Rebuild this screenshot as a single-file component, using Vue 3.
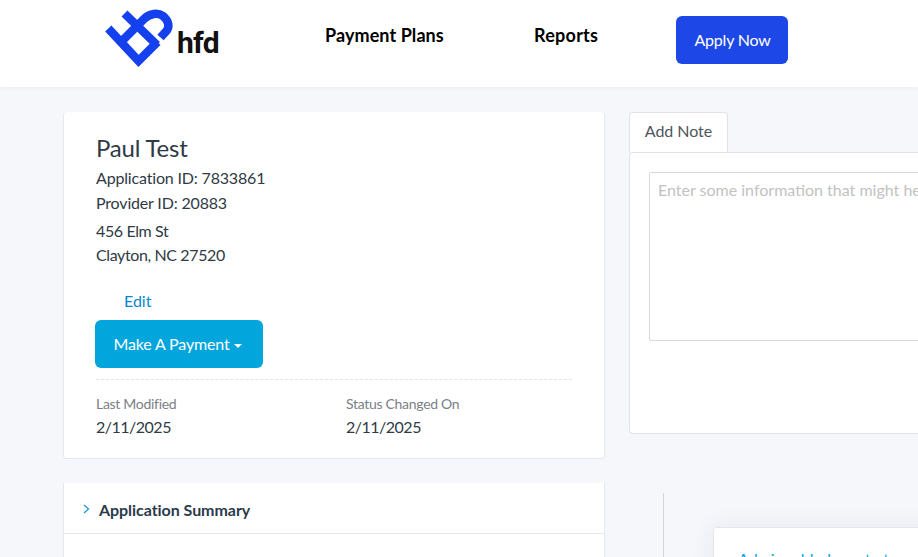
<template>
  <div class="page">
    <header class="topbar">
      <a class="logo">
        <svg class="mark" width="72" height="60" viewBox="104 8 72 60">
          <g fill="none" stroke="#1440ee" stroke-width="8.500">
            <path d="M124.500 13.500 L157 45" />
            <path d="M108.300 28.500 L138.500 61 L157.500 42" />
            <path d="M122 41 L144 19 C150 13 158 12.500 163 16 C169 21 170 27 166 31.500 L160.500 37.500" />
          </g>
        </svg>
        <span class="logo-text">hfd</span>
      </a>
      <nav class="nav">
        <a class="nav-link first">Payment Plans</a>
        <a class="nav-link second">Reports</a>
        <button class="apply">Apply Now</button>
      </nav>
    </header>
    <main class="content">
      <section class="left">
        <div class="card">
          <h2 class="name">Paul Test</h2>
          <div class="line">Application ID: 7833861</div>
          <div class="line">Provider ID: 20883</div>
          <div class="address">
            <div>456 Elm St</div>
            <div>Clayton, NC 27520</div>
          </div>
          <a class="edit">Edit</a>
          <button class="pay">Make A Payment <i class="caret"></i></button>
          <div class="dates">
            <div class="date-col">
              <div class="label">Last Modified</div>
              <div class="value">2/11/2025</div>
            </div>
            <div class="date-col">
              <div class="label">Status Changed On</div>
              <div class="value">2/11/2025</div>
            </div>
          </div>
        </div>
        <div class="summary">
          <div class="summary-head">
            <svg class="chev" width="7" height="10" viewBox="0 0 7 10"><path d="M1 1l4.500 4-4.500 4" fill="none" stroke="#1e9be0" stroke-width="1.300"/></svg>
            <span>Application Summary</span>
          </div>
        </div>
      </section>
      <section class="right">
        <div class="tab">Add Note</div>
        <div class="note">
          <textarea class="area" placeholder="Enter some information that might help the team review this application"></textarea>
        </div>
        <div class="lower">
          <div class="timeline"></div>
          <div class="advice"><span>Admin added a note to</span></div>
        </div>
      </section>
    </main>
  </div>
</template>

<script setup>
</script>

<style>
html, body { margin: 0; height: 100%; overflow: hidden; background: #f6f7fb; }
</style>

<style scoped>
.page {
  width: 918px;
  height: 557px;
  overflow: hidden;
  background: #f6f7fb;
  font-family: Lato, sans-serif;
  color: #2f3a45;
}
.topbar {
  height: 87px;
  background: #fff;
  box-shadow: 0 1px 6px rgba(30, 40, 70, .05);
  display: flex;
  align-items: flex-start;
  padding-left: 104px;
  box-sizing: border-box;
}
.logo { display: flex; align-items: flex-start; width: 221px; padding-top: 8px; }
.logo-text {
  font: 700 30px/1 "Roboto", sans-serif;
  color: #111;
  margin: 20px 0 0 1px;
  letter-spacing: -.7px;
}
.mark { flex: none; }
.nav { display: flex; align-items: flex-start; }
.nav-link { font-size: 18px; font-weight: 700; color: #000; line-height: 22px; margin-top: 24px; }
.first { width: 209px; letter-spacing: .08px; }
.second { width: 142px; letter-spacing: .25px; }
.apply {
  margin-top: 16px;
  width: 112px;
  height: 48px;
  padding: 0 0 2px 1px;
  background: #1d47e6;
  border: 0;
  border-radius: 6px;
  color: #fff;
  font: 400 16px Lato, sans-serif;
  letter-spacing: -.2px;
}
.content {
  display: flex;
  padding: 25px 0 0 63px;
  gap: 24px;
}
.left { width: 542px; flex: none; }
.card {
  height: 347px;
  background: #fff;
  border: 1px solid #e6e7eb;
  border-top: 0;
  border-radius: 4px;
  padding: 23px 32px 0;
  box-sizing: border-box;
  font-size: 16px;
}
.name { margin: 0; font-size: 24px; font-weight: 400; line-height: 26px; color: #2f3a45; letter-spacing: -.2px; }
.line { line-height: 25px; letter-spacing: -.17px; }
.line:first-of-type { margin-top: 4px; }
.address { margin-top: 4px; line-height: 24px; letter-spacing: -.38px; }
.address div:first-child { margin-top: 1px; }
.edit { display: block; margin: 23px 0 0 28px; color: #0b86d1; line-height: 22px; }
.pay {
  display: block;
  margin: 8px 0 0 -1px;
  width: 168px;
  height: 48px;
  padding: 0 3px 2px 0;
  background: #03a5dd;
  border: 0;
  border-radius: 6px;
  color: #fff;
  font: 400 16px Lato, sans-serif;
  letter-spacing: -.15px;
}
.caret {
  display: inline-block;
  width: 0;
  height: 0;
  margin-left: 0;
  vertical-align: 2px;
  border-top: 4px solid #fff;
  border-left: 4px solid transparent;
  border-right: 4px solid transparent;
}
.dates {
  display: flex;
  margin-top: 11px;
  padding-top: 15px;
  border-top: 1px dashed #e3e4e8;
  width: 476px;
}
.date-col { width: 250px; flex: none; }
.label { font-size: 14px; line-height: 18px; color: #7b8087; letter-spacing: -.3px; }
.value { line-height: 24px; margin-top: 2px; letter-spacing: -.5px; }
.summary {
  margin-top: 24px;
  height: 120px;
  background: #fff;
  border-left: 1px solid #e6e7eb;
  border-right: 1px solid #e6e7eb;
}
.summary-head {
  height: 48px;
  padding-top: 2px;
  box-sizing: content-box;
  border-bottom: 1px solid #e6e7eb;
  display: flex;
  align-items: center;
  padding-left: 19px;
  gap: 9px;
  font-size: 16px;
  font-weight: 700;
  color: #2b3a4a;
  letter-spacing: -.05px;
}
.right { width: 330px; flex: none; }
.tab {
  width: 99px;
  height: 40px;
  box-sizing: border-box;
  background: #fff;
  border: 1px solid #e1e2e6;
  border-bottom: 0;
  border-radius: 4px 4px 0 0;
  text-align: center;
  line-height: 36px;
  font-size: 16px;
  color: #4c5560;
  letter-spacing: -.05px;
}
.note {
  height: 282px;
  background: #fff;
  border: 1px solid #e1e2e6;
  border-right: 0;
  border-radius: 4px 0 0 4px;
  padding: 19px 0 0 19px;
  box-sizing: border-box;
}
.area {
  display: block;
  width: 700px;
  height: 169px;
  box-sizing: border-box;
  border: 1px solid #d8d9dc;
  border-radius: 2px;
  padding: 7px 8px;
  font: 400 16px Lato, sans-serif;
  resize: none;
  outline: 0;
}
.area::placeholder { color: #c2c2c2; opacity: 1; }
.lower { display: flex; height: 70px; }
.timeline { width: 1px; height: 70px; margin: 59px 0 0 34px; background: #d3d4d8; flex: none; }
.advice {
  margin: 93px 0 0 49px;
  width: 300px;
  height: 80px;
  flex: none;
  background: #fff;
  border: 1px solid #e6e7eb;
  border-radius: 3px;
  box-shadow: 0 0 24px rgba(30, 40, 70, .07);
  padding: 21px 24px;
  box-sizing: border-box;
  color: #03a5dd;
  font-size: 16px;
  white-space: nowrap;
  overflow: hidden;
}
</style>
